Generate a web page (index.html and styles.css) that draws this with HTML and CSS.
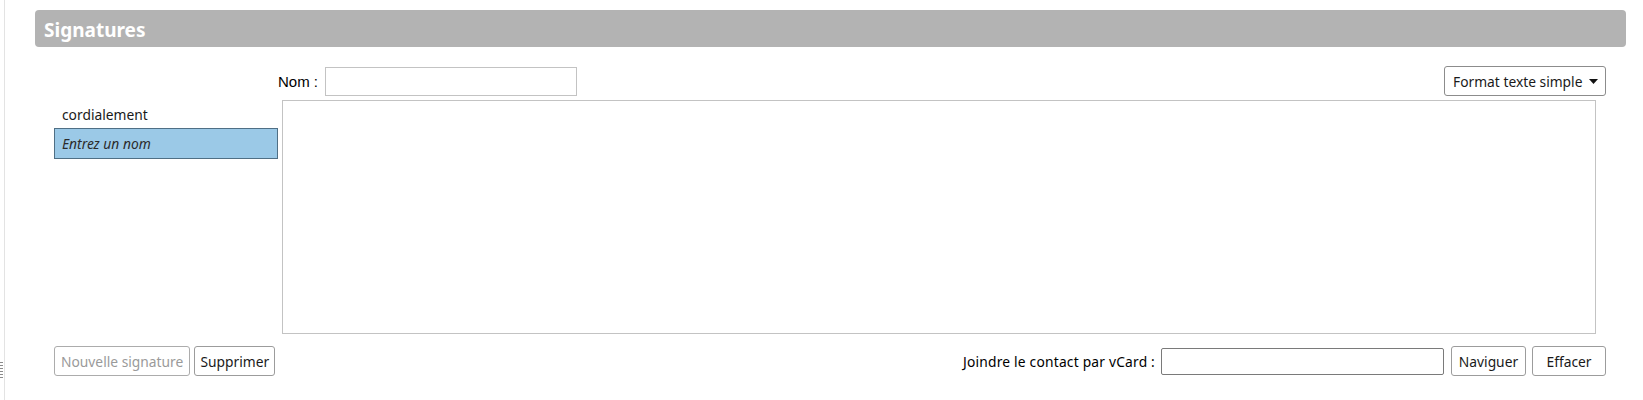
FILE: index.html
```html
<!DOCTYPE html>
<html lang="fr">
<head>
<meta charset="utf-8">
<title>Signatures</title>
<link rel="stylesheet" href="styles.css">
</head>
<body>
<div class="side"><div class="grip"></div></div>
<div class="main">
  <div class="header">Signatures</div>
  <div class="content">
    <div class="toprow">
      <div class="nom-group">
        <label class="nom-label">Nom :</label>
        <div class="nom-input"></div>
      </div>
      <div class="format">
        <span>Format texte simple</span>
        <svg class="caret" width="9" height="5" viewBox="0 0 9 5"><path d="M0 0H9L4.5 5Z" fill="#111"/></svg>
      </div>
    </div>
    <div class="middle">
      <div class="list">
        <div class="item">cordialement</div>
        <div class="item selected">Entrez un nom</div>
      </div>
      <div class="editor"></div>
    </div>
    <div class="bottomrow">
      <div class="left-buttons">
        <div class="btn disabled">Nouvelle signature</div>
        <div class="btn del">Supprimer</div>
      </div>
      <div class="right-group">
        <span class="vcard-label">Joindre le contact par vCard :</span>
        <div class="vcard-input"></div>
        <div class="btn nav">Naviguer</div>
        <div class="btn clear">Effacer</div>
      </div>
    </div>
  </div>
</div>
</body>
</html>
```
FILE: styles.css
```css
html, body {
  margin: 0;
  padding: 0;
  background: #fff;
}
body {
  display: flex;
  height: 400px;
  overflow: hidden;
  font-family: "Noto Sans", "Open Sans", sans-serif;
  font-size: 13.8px;
  color: #1a1a1a;
}
.side {
  width: 4px;
  display: flex;
  flex-direction: column;
  justify-content: flex-end;
  padding-bottom: 22px;
  box-sizing: border-box;
}
.grip {
  width: 3px;
  height: 16px;
  background: repeating-linear-gradient(to bottom, #8a8a8a 0 1px, transparent 1px 3px);
}
.main {
  flex: 1;
  border-left: 1px solid #e3e3e3;
  padding: 10px 17px 0 30px;
}
.header {
  height: 37px;
  box-sizing: border-box;
  border-radius: 4px;
  background: #b3b3b3;
  color: #fff;
  font-weight: bold;
  font-size: 19px;
  padding-left: 9px;
  display: flex;
  align-items: center;
  padding-top: 2px;
}
.content {
  margin: 19px 20px 0 19px;
}
.toprow {
  display: flex;
  align-items: center;
  height: 30px;
}
.nom-group {
  display: flex;
  align-items: center;
  margin-left: 224px;
  gap: 7px;
}
.nom-label {
  font-family: "Liberation Sans", Arial, sans-serif;
  font-size: 15px;
  color: #000;
}
.nom-input {
  width: 252px;
  height: 29px;
  box-sizing: border-box;
  border: 1px solid #c3c3c3;
}
.format {
  margin-left: auto;
  width: 162px;
  height: 30px;
  box-sizing: border-box;
  border: 1px solid #8c8c8c;
  border-radius: 3px;
  display: flex;
  align-items: center;
  padding: 0 7px 0 8px;
  justify-content: space-between;
}
.middle {
  display: flex;
  gap: 4px;
  margin-top: 4px;
}
.list {
  width: 224px;
}
.item {
  height: 28px;
  display: flex;
  align-items: center;
  padding-left: 8px;
  box-sizing: border-box;
}
.item.selected {
  height: 31px;
  background: #9bc9e7;
  border: 1px solid #4f6f85;
  padding-left: 7px;
  font-style: italic;
  color: #2b2b2b;
}
.editor {
  width: 1314px;
  height: 234px;
  box-sizing: border-box;
  border: 1px solid #c3c3c3;
}
.bottomrow {
  display: flex;
  align-items: center;
  justify-content: space-between;
  margin-top: 12px;
  height: 30px;
}
.left-buttons, .right-group {
  display: flex;
  align-items: center;
}
.left-buttons { gap: 4px; }
.btn {
  height: 30px;
  box-sizing: border-box;
  border: 1px solid #9c9c9c;
  border-radius: 3px;
  padding: 0 6px;
  display: flex;
  align-items: center;
  justify-content: center;
  background: #fff;
  color: #1a1a1a;
}
.btn.del {
  width: 81px;
  padding: 0;
}
.btn.disabled {
  color: #9a9a9a;
  border-color: #acacac;
}
.vcard-label {
  margin-right: 6px;
  color: #000;
  letter-spacing: 0.2px;
}
.vcard-input {
  width: 283px;
  height: 27px;
  box-sizing: border-box;
  border: 1px solid #7a7a7a;
  border-radius: 2px;
  margin-right: 7px;
}
.btn.nav {
  width: 75px;
  margin-right: 6px;
}
.btn.clear {
  width: 74px;
}
```
